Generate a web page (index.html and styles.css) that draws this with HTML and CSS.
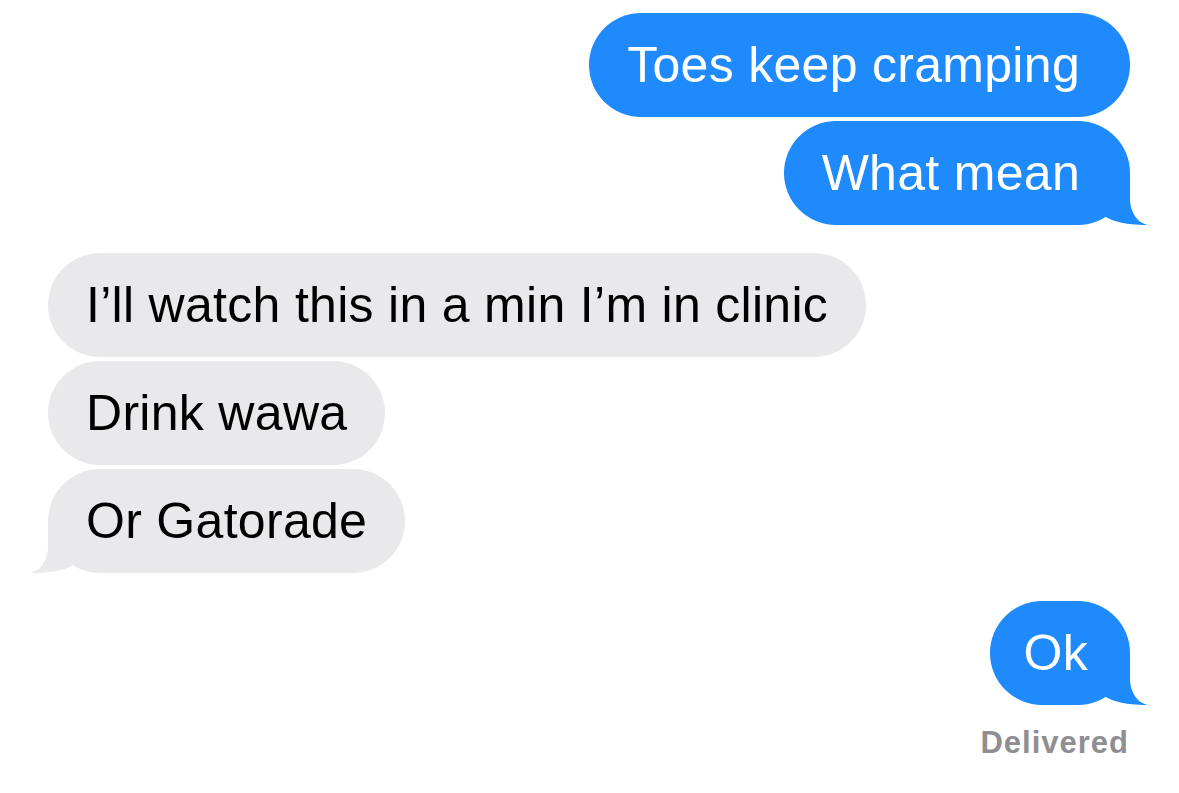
FILE: index.html
```html
<!DOCTYPE html>
<html lang="en">
<head>
  <meta charset="UTF-8">
  <meta name="viewport" content="width=device-width, initial-scale=1.0">
  <title>Messages</title>
  <link rel="stylesheet" href="styles.css">
</head>
<body>
  <main class="thread">
    <div class="group sent">
      <div class="bubble">Toes keep cramping</div>
      <div class="bubble tail">What mean</div>
    </div>
    <div class="group received">
      <div class="bubble">I’ll watch this in a min I’m in clinic</div>
      <div class="bubble">Drink wawa</div>
      <div class="bubble tail">Or Gatorade</div>
    </div>
    <div class="group sent">
      <div class="bubble tail short">Ok</div>
      <div class="status">Delivered</div>
    </div>
  </main>
</body>
</html>
```

FILE: styles.css
```css
body {
  margin: 0;
  background: #fff;
  font-family: "Liberation Sans", Arial, sans-serif;
}
.thread {
  display: flex;
  flex-direction: column;
  gap: 28px;
  padding: 13px 49px 0 48px;
}
.group {
  display: flex;
  flex-direction: column;
  gap: 4px;
}
.sent {
  align-items: flex-end;
}
.received {
  align-items: flex-start;
}
.bubble {
  position: relative;
  font-size: 50px;
  letter-spacing: 0.3px;
  line-height: 56px;
  padding: 24px 38px;
  border-radius: 52px;
  white-space: nowrap;
}
.sent .bubble {
  background: #1f8afb;
  color: #fff;
  padding-right: 50px;
}
.sent .bubble.short {
  padding-left: 34px;
  padding-right: 42px;
}
.received .bubble {
  background: #e9e9eb;
  color: #000;
}

/* tails */
.bubble.tail::before,
.bubble.tail::after {
  content: "";
  position: absolute;
  bottom: 0;
}
.sent .tail::before {
  right: -17px;
  width: 46px;
  height: 52px;
  background: #1f8afb;
  border-bottom-left-radius: 42px 15px;
}
.sent .tail::after {
  right: -30px;
  width: 30px;
  height: 56px;
  background: #fff;
  border-bottom-left-radius: 20px 26px;
}
.received .tail::before {
  left: -16px;
  width: 46px;
  height: 52px;
  background: #e9e9eb;
  border-bottom-right-radius: 42px 15px;
}
.received .tail::after {
  left: -30px;
  width: 30px;
  height: 56px;
  background: #fff;
  border-bottom-right-radius: 20px 26px;
}

.status {
  margin-top: 16px;
  padding-right: 1px;
  font-size: 31px;
  font-weight: bold;
  letter-spacing: 1px;
  line-height: 36px;
  color: #8e8e93;
}
```
